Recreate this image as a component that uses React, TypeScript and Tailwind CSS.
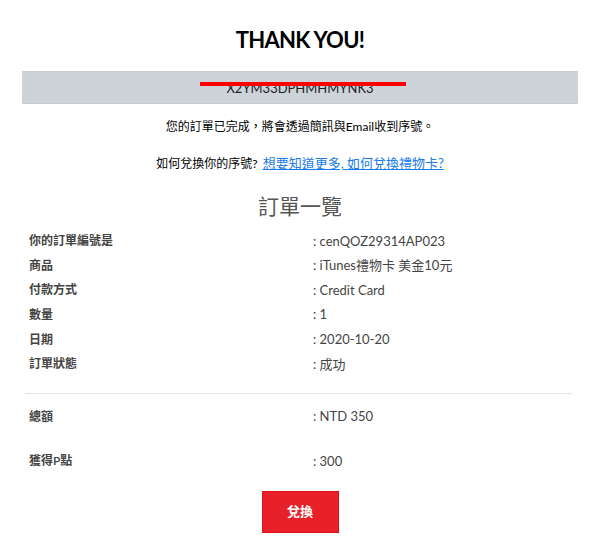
import React from "react";

const rows: [string, string][] = [
  ["你的訂單編號是", "cenQOZ29314AP023"],
  ["商品", "iTunes禮物卡 美金10元"],
  ["付款方式", "Credit Card"],
  ["數量", "1"],
  ["日期", "2020-10-20"],
  ["訂單狀態", "成功"],
];

function Row({ label, value }: { label: string; value: string }) {
  return (
    <div className="grid grid-cols-[284px_1fr] h-[24.6px] items-center pl-[7px] text-[12px]">
      <div className="text-[#444] font-semibold">{label}</div>
      <div className="text-[#444] text-[13px]">: {value}</div>
    </div>
  );
}

export default function App() {
  return (
    <div
      className="w-[600px] h-[548px] bg-white px-[22px] text-black"
      style={{ fontFamily: "Lato, 'Noto Sans CJK TC', sans-serif" }}
    >
      <div className="h-[71px] pt-[8px] flex items-center justify-center">
        <h1 className="text-[22px] font-bold tracking-[-0.7px]">THANK YOU!</h1>
      </div>
      <div className="relative h-[33px] bg-[#ced3da] border-y border-[#c4cad1] flex items-center justify-center">
        <span className="text-[13px] text-[#222] pt-[3px]">X2YM33DPHMHMYNK3</span>
        <div className="absolute left-[178px] top-[10px] w-[206px] h-[4px] bg-[#ff0000]" />
      </div>
      <div className="h-[46px] flex items-center justify-center text-[12px]">
        您的訂單已完成，將會透過簡訊與Email收到序號。
      </div>
      <div className="h-[28px] flex items-center justify-center">
        <span className="text-[12px]">如何兌換你的序號?</span>
        <a className="ml-[5px] text-[13px] text-[#1a7be8] underline" href="#">
          想要知道更多, 如何兌換禮物卡?
        </a>
      </div>
      <div className="h-[51px] pt-[5px] flex items-center justify-center">
        <h2 className="text-[21px] text-[#555]">訂單一覽</h2>
      </div>
      {rows.map(([l, v]) => (
        <Row key={l} label={l} value={v} />
      ))}
      <div className="mt-[16px] ml-[3px] mr-[6px] h-px bg-[#e2e2e2]" />
      <div className="mt-[11px]">
        <Row label="總額" value="NTD 350" />
      </div>
      <div className="mt-[20px]">
        <Row label="獲得P點" value="300" />
      </div>
      <div className="mt-[17px] flex justify-center">
        <button className="w-[77px] h-[42px] bg-[#e8202a] border border-[#e01018] text-white text-[13px] font-bold">
          兌換
        </button>
      </div>
    </div>
  );
}
